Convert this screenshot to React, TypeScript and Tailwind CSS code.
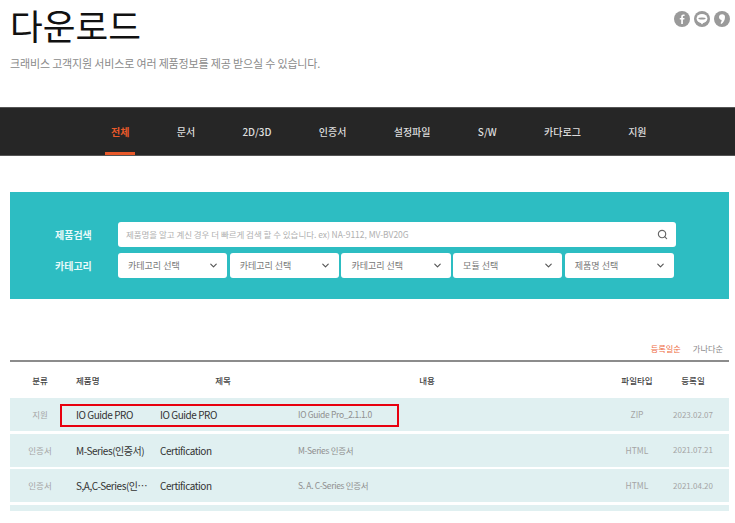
import { ChevronDown, Search } from 'lucide-react';

const navItems = ['전체', '문서', '2D/3D', '인증서', '설정파일', 'S/W', '카다로그', '지원'];
const selects = ['카테고리 선택', '카테고리 선택', '카테고리 선택', '모듈 선택', '제품명 선택'];
const rows = [
  { type: '지원', product: 'IO Guide PRO', title: 'IO Guide PRO', body: 'IO Guide Pro_2.1.1.0', file: 'ZIP', date: '2023.02.07' },
  { type: '인증서', product: 'M-Series(인증서)', title: 'Certification', body: 'M-Series 인증서', file: 'HTML', date: '2021.07.21' },
  { type: '인증서', product: 'S,A,C-Series(인증서)', title: 'Certification', body: 'S. A. C-Series 인증서', file: 'HTML', date: '2021.04.20' },
];
const columns = 'grid grid-cols-[60px_84px_138px_315px_60px_52px] items-center';

function SocialIcons() {
  return (
    <div className="flex gap-1">
      <svg width="16" height="16" viewBox="0 0 16 16">
        <circle cx="8" cy="8" r="8" fill="#9a9a9a" />
        <path d="M8.9 13V8.6h1.4l.2-1.7H8.9V5.9c0-.5.1-.8.8-.8h.9V3.6c-.2 0-.7-.1-1.3-.1-1.3 0-2.1.8-2.1 2.2v1.2H5.8v1.7h1.4V13z" fill="#fff" />
      </svg>
      <svg width="16" height="16" viewBox="0 0 16 16">
        <circle cx="8" cy="8" r="8" fill="#9a9a9a" />
        <ellipse cx="8" cy="7.6" rx="5.4" ry="4.6" fill="#fff" />
        <ellipse cx="8" cy="7.6" rx="3.6" ry="1" fill="#9a9a9a" />
        <path d="M6.5 11.5 8 13.6l1.5-2.1z" fill="#fff" />
      </svg>
      <svg width="16" height="16" viewBox="0 0 16 16">
        <circle cx="8" cy="8" r="8" fill="#9a9a9a" />
        <path d="M8.2 3.2c1.7 0 2.8 1 2.8 2.7 0 3-1.4 5.4-3.6 7l-.9-.7c.7-1 1.1-2 1.2-3.3-1.5-.1-2.7-1.2-2.7-2.9 0-1.6 1.3-2.8 3.2-2.8z" fill="#fff" />
      </svg>
    </div>
  );
}

export default function App() {
  return (
    <div className="h-[523px] w-[735px] overflow-hidden bg-white font-['Noto_Sans_CJK_KR','Noto_Sans',sans-serif]">
      <header className="flex h-[107px] justify-between pl-2.5 pr-[5px]">
        <div>
          <h1 className="text-[35.6px] leading-[50px] text-[#111]">다운로드</h1>
          <p className="mt-[5px] text-[11px] leading-[16px] tracking-[-0.16px] text-[#8a8a8a]">
            크래비스 고객지원 서비스로 여러 제품정보를 제공 받으실 수 있습니다.
          </p>
        </div>
        <div className="mt-[11px]">
          <SocialIcons />
        </div>
      </header>

      <nav className="flex h-[49px] gap-[35.3px] border-y border-y-[#555] bg-[#262626] pl-[105px]">
        {navItems.map((item, i) => (
          <a
            key={item}
            className={
              i === 0
                ? 'flex items-center border-b-[3px] border-[#e9592a] px-1.5 pt-[3px] text-[10px] font-bold text-[#e9592a]'
                : 'flex items-center border-b-[3px] border-transparent px-1.5 pt-[3px] text-[10px] font-medium text-[#ddd]'
            }
          >
            {item}
          </a>
        ))}
      </nav>

      <section className="ml-2.5 mt-9 h-[107px] w-[719px] bg-[#2dbdc2] pt-[30px]">
        <div className="flex items-center">
          <span className="w-[108px] pl-[45px] text-[10px] font-bold text-[#e8fafa]">제품검색</span>
          <div className="flex h-[25px] w-[558px] items-center justify-between rounded-[3px] bg-white pl-2 pr-2">
            <span className="text-[8.5px] tracking-[-0.04px] text-[#b0b0b0]">
              제품명을 알고 계신 경우 더 빠르게 검색 할 수 있습니다. ex) NA-9112, MV-BV20G
            </span>
            <Search size={11} strokeWidth={2.5} className="text-[#666]" />
          </div>
        </div>
        <div className="mt-1.5 flex items-center">
          <span className="w-[108px] pl-[45px] text-[10px] font-bold text-[#e8fafa]">카테고리</span>
          <div className="flex w-[556px] gap-[2.5px]">
            {selects.map((label, i) => (
              <div key={i} className="flex h-[25px] flex-1 items-center justify-between rounded-[3px] bg-white pl-2.5 pr-[8px]">
                <span className="text-[9px] text-[#777]">{label}</span>
                <ChevronDown size={11} strokeWidth={2.5} className="text-[#555]" />
              </div>
            ))}
          </div>
        </div>
      </section>

      <div className="ml-2.5 w-[719px]">
        <div className="flex h-[61px] items-end justify-end gap-3 pb-[5px] pr-[6px] text-[8.2px] leading-[13px]">
          <span className="text-[#ee6a3f]">등록일순</span>
          <span className="text-[#888]">가나다순</span>
        </div>
        <div className={`${columns} h-[38px] border-t-2 border-t-[#8c8c8c] text-[8.5px] font-medium text-[#444]`}>
          <span className="text-center">분류</span>
          <span className="pl-1.5">제품명</span>
          <span className="text-center">제목</span>
          <span className="pr-[45px] text-center">내용</span>
          <span className="text-center">파일타입</span>
          <span className="text-center">등록일</span>
        </div>
        <div className="flex flex-col gap-[2.5px]">
          {rows.map((row, i) => (
            <div key={row.date} className={`${columns} relative h-[33px] bg-[#e0f0f1]`}>
              <span className="text-center text-[8.5px] text-[#a5a5a5]">{row.type}</span>
              <span className="truncate pl-1.5 pr-1 text-[10px] tracking-[-0.45px] text-[#333]">{row.product}</span>
              <span className="pl-1.5 text-[10px] tracking-[-0.45px] text-[#333]">{row.title}</span>
              <span className="pl-1.5 text-[8.5px] tracking-[-0.33px] text-[#8f8f8f]">{row.body}</span>
              <span className="text-center text-[8.5px] text-[#a5a5a5]">{row.file}</span>
              <span className="text-center text-[8px] text-[#a5a5a5]">{row.date}</span>
              {i === 0 && <div className="absolute left-[50px] top-[6px] h-[23px] w-[339px] border-2 border-[#e8000f]" />}
            </div>
          ))}
          <div className="h-1.5 bg-[#e0f0f1]" />
        </div>
      </div>
    </div>
  );
}
